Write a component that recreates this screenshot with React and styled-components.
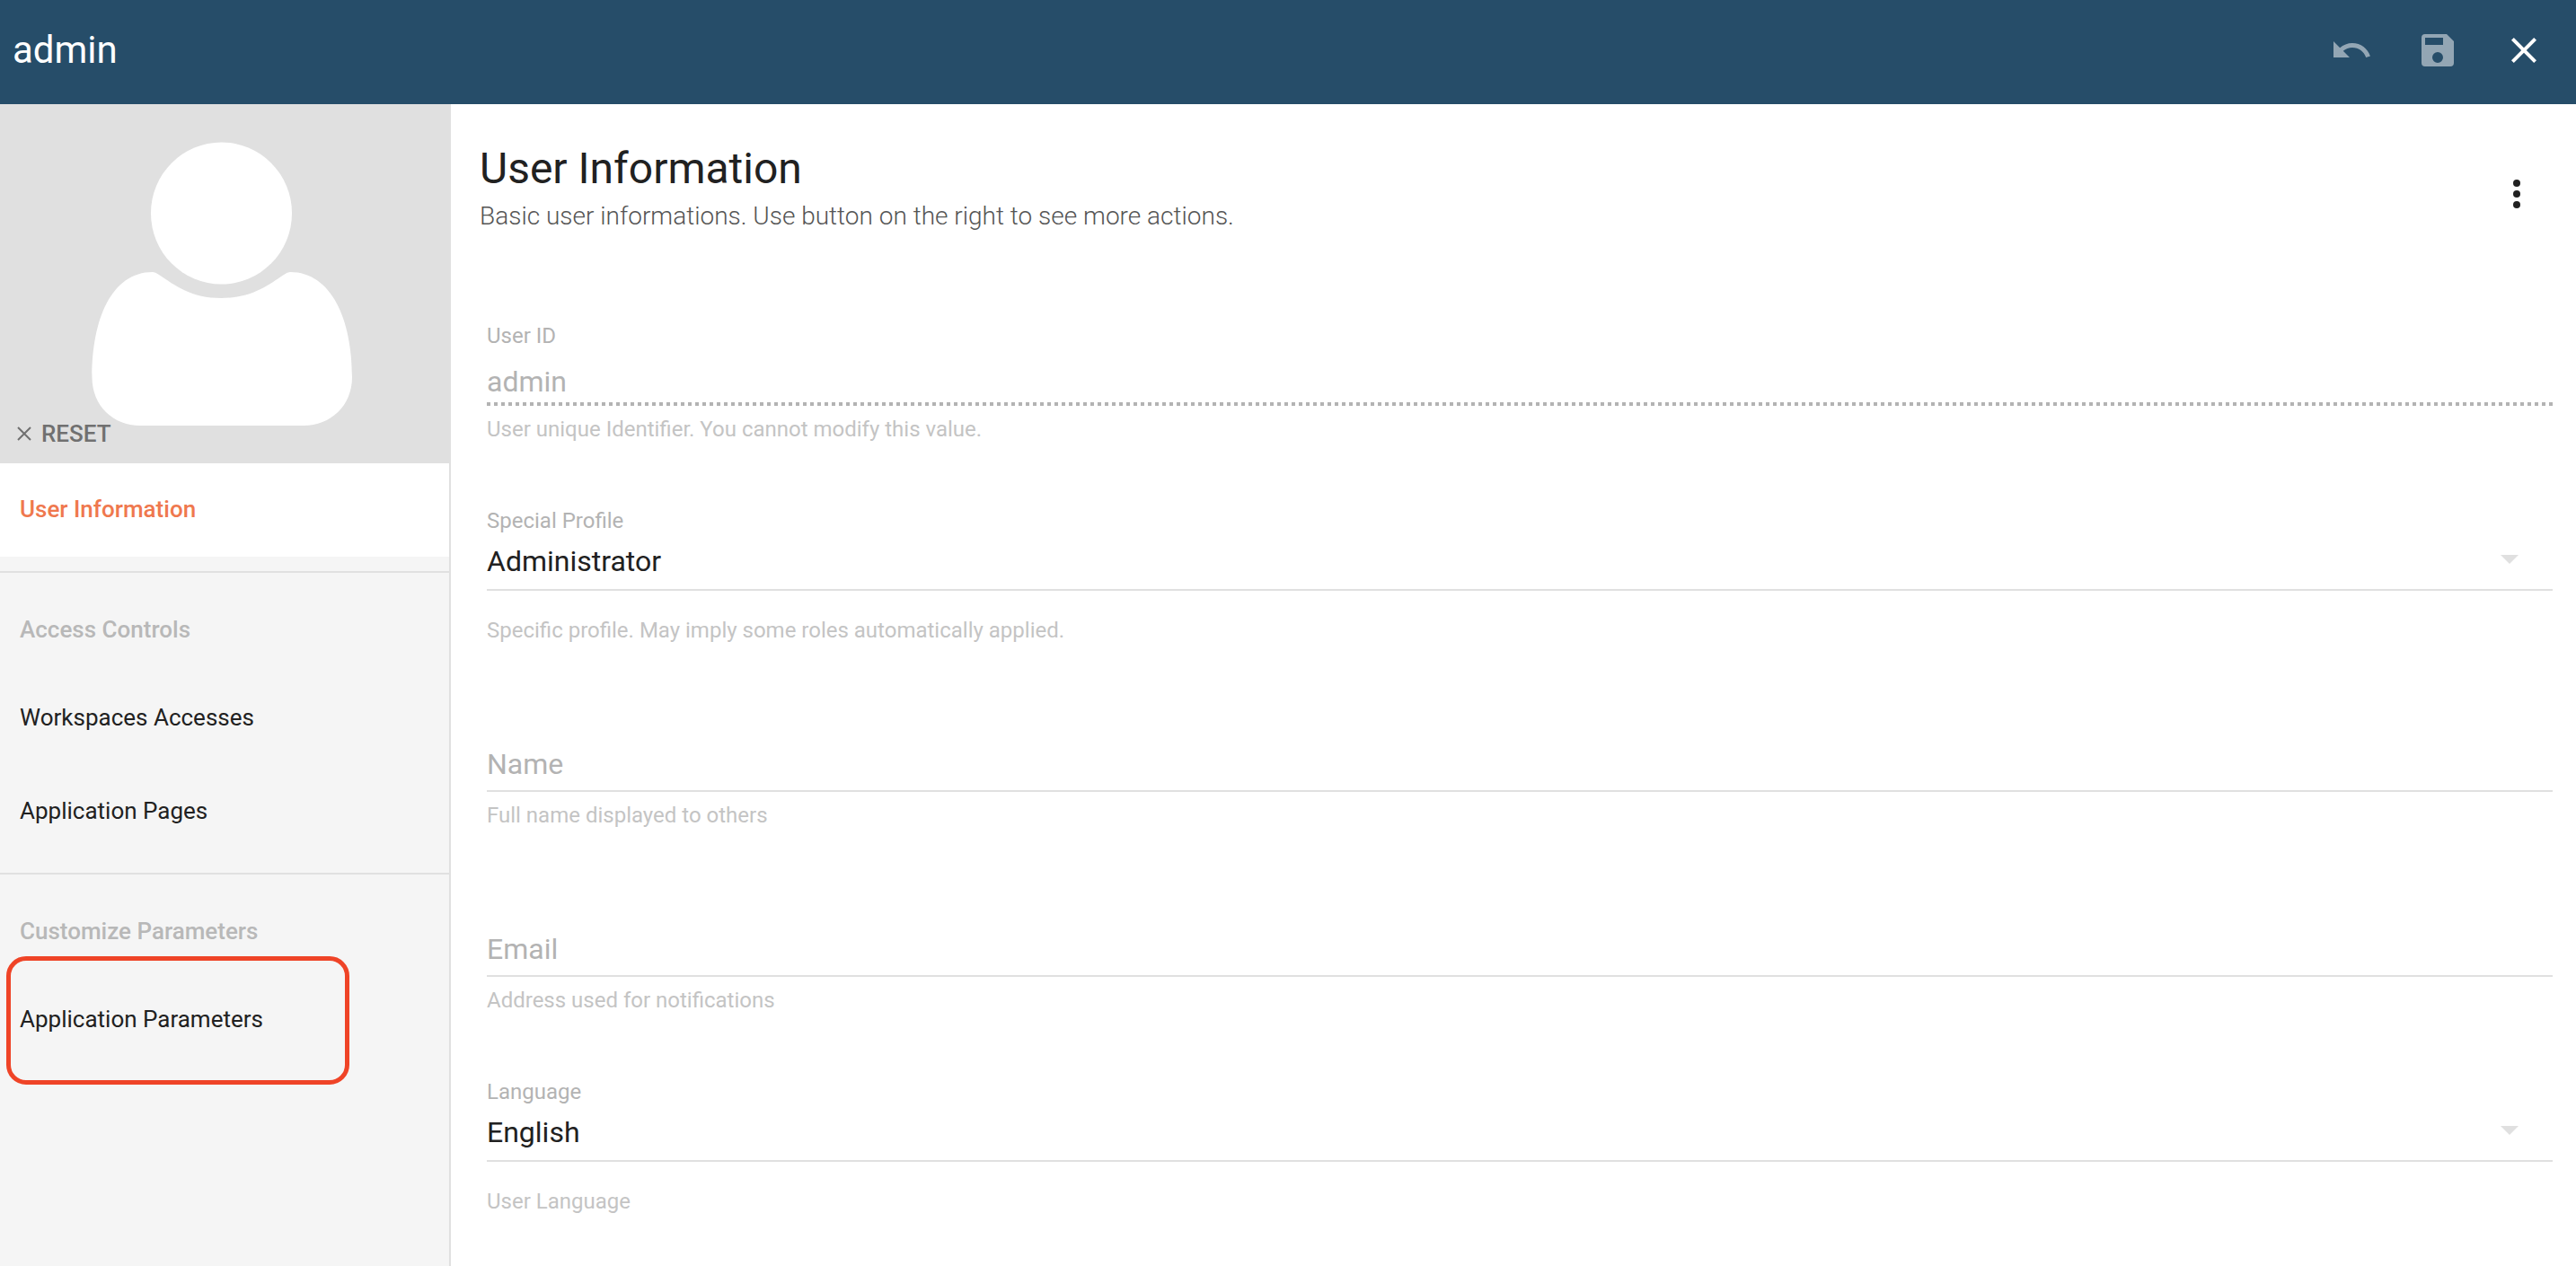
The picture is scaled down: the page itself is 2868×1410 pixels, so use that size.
import React from "react";
import styled, { createGlobalStyle } from "styled-components";

const GlobalStyle = createGlobalStyle`
  *, *::before, *::after { box-sizing: border-box; }
  body {
    margin: 0;
    background: #ffffff;
    color: #212121;
    font-family: Roboto, "Noto Sans", sans-serif;
    font-size: 26px;
  }
  button, input, select { font: inherit; color: inherit; }
  h1, h2, p { margin: 0; font-weight: 400; }
`;

const Page = styled.div`
  display: flex;
  flex-direction: column;
  min-height: 100vh;
`;

const TopBar = styled.header`
  display: flex;
  align-items: center;
  justify-content: space-between;
  padding: 8px 10px 12px 14px;
  background: #264d69;
  color: #ffffff;
`;

const BarTitle = styled.h1`
  font-size: 42px;
  line-height: 56px;
`;

const Actions = styled.div`
  display: flex;
`;

const IconButton = styled.button`
  display: flex;
  align-items: center;
  justify-content: center;
  width: 96px;
  height: 96px;
  padding: 0;
  border: 0;
  background: none;

  svg {
    width: 48px;
    height: 48px;
    fill: currentColor;
    opacity: ${(p) => (p.disabled ? 0.5 : 1)};
  }
`;

const Body = styled.div`
  display: flex;
  flex: 1;
`;

const Sidebar = styled.aside`
  flex: 0 0 502px;
  border-right: 2px solid #e0e0e0;
  background: #f5f5f5;
`;

const Avatar = styled.div`
  display: grid;
  height: 400px;
  background: #e0e0e0;

  > * { grid-area: 1 / 1; }
`;

const ResetButton = styled.button`
  display: flex;
  align-items: center;
  align-self: end;
  justify-self: start;
  gap: 8px;
  height: 48px;
  margin: 0 0 9px 16px;
  padding: 0;
  border: 0;
  background: none;
  color: #707070;
  font-weight: 500;

  svg { width: 22px; height: 22px; }
`;

const Menu = styled.nav`
  display: flex;
  flex-direction: column;
`;

const MenuGroup = styled.div`
  display: flex;
  flex-direction: column;
  padding: ${(p) => (p.$first ? "0 0 16px" : "16px 0")};

  & + & { border-top: 2px solid #e0e0e0; }
`;

const MenuHeading = styled.h2`
  padding-left: 22px;
  color: #b8b8b8;
  font-size: 26px;
  font-weight: 500;
  line-height: 94px;
`;

const MenuItem = styled.a`
  position: relative;
  padding: 0 0 2px 22px;
  background: ${(p) => (p.$active ? "#ffffff" : "transparent")};
  color: ${(p) => (p.$active ? "#ef784e" : "inherit")};
  font-weight: ${(p) => (p.$active ? 500 : 400)};
  line-height: 102px;
  text-decoration: none;
`;

const Highlight = styled.span`
  position: absolute;
  top: -19px;
  bottom: -20px;
  left: 7px;
  width: 382px;
  border: 5px solid #ef4427;
  border-radius: 22px;
  pointer-events: none;
`;

const Main = styled.main`
  flex: 1;
  min-width: 0;
`;

const PaneHeader = styled.div`
  display: flex;
  align-items: flex-end;
  justify-content: space-between;
  padding: 40px 18px 0 32px;
`;

const PaneTitles = styled.div`
  align-self: flex-start;
`;

const PaneTitle = styled.h2`
  font-size: 48px;
  line-height: 64px;
`;

const PaneLegend = styled.p`
  color: #555555;
  font-size: 28px;
  font-weight: 300;
  line-height: 42px;
`;

const MoreSlot = styled.div`
  padding-top: 12px;
`;

const Form = styled.form`
  display: flex;
  flex-direction: column;
  gap: 70px;
  padding: 94px 26px 0 40px;
`;

const Field = styled.div`
  display: grid;
  grid-template-columns: minmax(0, 1fr);
  grid-template-rows: 32px 62px auto;
`;

const Label = styled.label`
  grid-area: ${(p) => (p.$inline ? "2 / 1" : "1 / 1")};
  color: #b3b3b3;
  font-size: ${(p) => (p.$inline ? 32 : 24)}px;
  line-height: ${(p) => (p.$inline ? 62 : 32)}px;
  pointer-events: none;
`;

const TextInput = styled.input`
  grid-area: 2 / 1;
  width: 100%;
  padding: 0;
  border: 0;
  border-bottom: 2px solid #e0e0e0;
  border-radius: 0;
  background: transparent;
  font-size: 32px;
  outline: none;

  &:disabled {
    padding-top: 8px;
    border-bottom: 0;
    background: repeating-linear-gradient(to right, #b3b3b3 0 4px, transparent 4px 8px)
      left bottom / 100% 4px no-repeat;
    color: #b3b3b3;
  }
`;

const SelectBox = styled.div`
  grid-area: 2 / 1;
  position: relative;
  display: flex;

  svg {
    position: absolute;
    right: 38px;
    top: 22px;
    width: 20px;
    height: 10px;
    fill: #e0e0e0;
    pointer-events: none;
  }
`;

const Select = styled.select`
  flex: 1;
  min-width: 0;
  padding: 0 0 2px;
  border: 0;
  border-bottom: 2px solid #e0e0e0;
  border-radius: 0;
  background: transparent;
  font-size: 32px;
  appearance: none;
  outline: none;
`;

const Helper = styled.p`
  grid-area: 3 / 1;
  margin-top: ${(p) => (p.$far ? 28 : 10)}px;
  color: #c4c4c4;
  font-size: 24px;
  line-height: 32px;
`;

function TextField({ id, label, value, helper, disabled }) {
  return (
    <Field>
      <Label htmlFor={id} $inline={!value}>{label}</Label>
      <TextInput id={id} type="text" defaultValue={value} disabled={disabled} />
      <Helper>{helper}</Helper>
    </Field>
  );
}

function SelectField({ id, label, options, helper }) {
  return (
    <Field>
      <Label htmlFor={id}>{label}</Label>
      <SelectBox>
        <Select id={id}>
          {options.map((option) => (
            <option key={option}>{option}</option>
          ))}
        </Select>
        <svg viewBox="0 0 20 10" aria-hidden="true">
          <path d="M0 0h20L10 10z" />
        </svg>
      </SelectBox>
      <Helper $far>{helper}</Helper>
    </Field>
  );
}

export default function App() {
  return (
    <Page>
      <GlobalStyle />
      <TopBar>
        <BarTitle>admin</BarTitle>
        <Actions>
          <IconButton type="button" aria-label="Revert" disabled>
            <svg viewBox="0 0 24 24">
              <path d="M12.5 8c-2.65 0-5.05.99-6.9 2.6L2 7v9h9l-3.62-3.62c1.39-1.16 3.16-1.88 5.12-1.88 3.54 0 6.55 2.31 7.6 5.5l2.37-.78C21.08 11.03 17.15 8 12.5 8z" />
            </svg>
          </IconButton>
          <IconButton type="button" aria-label="Save" disabled>
            <svg viewBox="0 0 24 24">
              <path d="M15 9H5V5h10m-3 14a3 3 0 0 1-3-3 3 3 0 0 1 3-3 3 3 0 0 1 3 3 3 3 0 0 1-3 3m5-16H5a2 2 0 0 0-2 2v14a2 2 0 0 0 2 2h14a2 2 0 0 0 2-2V7l-4-4z" />
            </svg>
          </IconButton>
          <IconButton type="button" aria-label="Close">
            <svg viewBox="0 0 24 24">
              <path d="M19 6.41L17.59 5 12 10.59 6.41 5 5 6.41 10.59 12 5 17.59 6.41 19 12 13.41 17.59 19 19 17.59 13.41 12z" />
            </svg>
          </IconButton>
        </Actions>
      </TopBar>
      <Body>
        <Sidebar>
          <Avatar>
            <svg viewBox="0 0 500 400" fill="#ffffff" aria-hidden="true">
              <ellipse cx="246.5" cy="121.5" rx="78.5" ry="79" />
              <path d="M170 187C124 187 102.5 240 102.5 304C102.5 336 126 358 156 358H338C368 358 392 336 392 304C392 240 369 187 323 187Q320 187 316 190C298 202 280 216 246.500 216S195 202 177 190Q173 187 170 187z" />
            </svg>
            <ResetButton type="button">
              <svg viewBox="0 0 22 22" fill="none" stroke="currentColor" strokeWidth="2" aria-hidden="true">
                <path d="M4 4l14 14M18 4L4 18" />
              </svg>
              RESET
            </ResetButton>
          </Avatar>
          <Menu>
            <MenuGroup $first>
              <MenuItem href="#user" $active>User Information</MenuItem>
            </MenuGroup>
            <MenuGroup>
              <MenuHeading>Access Controls</MenuHeading>
              <MenuItem href="#workspaces">Workspaces Accesses</MenuItem>
              <MenuItem href="#pages">Application Pages</MenuItem>
            </MenuGroup>
            <MenuGroup>
              <MenuHeading>Customize Parameters</MenuHeading>
              <MenuItem href="#parameters">
                Application Parameters
                <Highlight />
              </MenuItem>
            </MenuGroup>
          </Menu>
        </Sidebar>
        <Main>
          <PaneHeader>
            <PaneTitles>
              <PaneTitle>User Information</PaneTitle>
              <PaneLegend>
                Basic user informations. Use button on the right to see more actions.
              </PaneLegend>
            </PaneTitles>
            <MoreSlot>
              <IconButton type="button" aria-label="More actions">
                <svg viewBox="0 0 24 24">
                  <circle cx="12" cy="6" r="2" />
                  <circle cx="12" cy="12" r="2" />
                  <circle cx="12" cy="18" r="2" />
                </svg>
              </IconButton>
            </MoreSlot>
          </PaneHeader>
          <Form>
            <TextField
              id="user-id"
              label="User ID"
              value="admin"
              helper="User unique Identifier. You cannot modify this value."
              disabled
            />
            <SelectField
              id="profile"
              label="Special Profile"
              options={["Administrator", "Standard User", "Shared User"]}
              helper="Specific profile. May imply some roles automatically applied."
            />
            <TextField id="name" label="Name" helper="Full name displayed to others" />
            <TextField id="email" label="Email" helper="Address used for notifications" />
            <SelectField
              id="language"
              label="Language"
              options={["English", "Français", "Deutsch"]}
              helper="User Language"
            />
          </Form>
        </Main>
      </Body>
    </Page>
  );
}
